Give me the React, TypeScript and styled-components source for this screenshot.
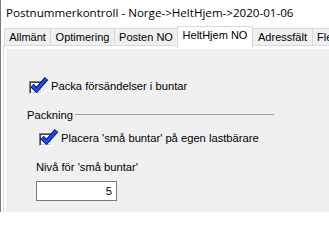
import React from "react";
import styled, { createGlobalStyle } from "styled-components";

const Global = createGlobalStyle`
  html, body { margin: 0; padding: 0; background: #ffffff; }
  body { font-family: "Liberation Sans", Arial, sans-serif; font-size: 11.2px; color: #000; }
`;

const Window = styled.div`
  width: 329px;
  height: 212px;
  box-sizing: border-box;
  border-left: 1px solid #7a7a7a;
  background: #ffffff;
  display: flex;
  flex-direction: column;
  overflow: hidden;
`;

const TitleBar = styled.div`
  height: 26px;
  flex: 0 0 26px;
  padding-left: 5px;
  box-sizing: border-box;
  font-family: "Open Sans", "Liberation Sans", sans-serif;
  font-size: 11.6px;
  line-height: 26px;
  white-space: nowrap;
  color: #000;
`;

const TabStrip = styled.div`
  height: 19px;
  flex: 0 0 19px;
  display: flex;
  align-items: flex-end;
  padding-left: 3px;
  position: relative;
  z-index: 1;
`;

const Tab = styled.div<{ $w: number; $active?: boolean; $clipped?: boolean }>`
  width: ${(p) => p.$w}px;
  flex: 0 0 ${(p) => p.$w}px;
  box-sizing: border-box;
  margin-right: -1px;
  border: 1px solid #d9d9d9;
  border-bottom: none;
  background: ${(p) => (p.$active ? "#ffffff" : "#f0f0f0")};
  height: ${(p) => (p.$active ? 22 : 17)}px;
  margin-bottom: ${(p) => (p.$active ? -3 : 0)}px;
  padding-top: 1px;
  padding-left: ${(p) => (p.$clipped ? 4 : 0)}px;
  line-height: 15px;
  font-size: 11px;
  text-align: ${(p) => (p.$clipped ? "left" : "center")};
  white-space: nowrap;
  overflow: hidden;
  position: relative;
  z-index: ${(p) => (p.$active ? 2 : 1)};
`;

const Panel = styled.div`
  flex: 1;
  margin-left: 2px;
  border-top: 1px solid #d9d9d9;
  border-left: 1px solid #d9d9d9;
  padding: 3px 0 0 2px;
  background: #ffffff;
  display: flex;
  min-height: 0;
`;

const Page = styled.div`
  flex: 1;
  background: #f0f0f0;
  display: flex;
  flex-direction: column;
  align-items: flex-start;
`;

const CheckRow = styled.div<{ $indent: number; $top: number }>`
  display: flex;
  align-items: center;
  height: 13px;
  margin-left: ${(p) => p.$indent}px;
  margin-top: ${(p) => p.$top}px;
  gap: 9px;
  white-space: nowrap;
`;

const Box = styled.span`
  position: relative;
  width: 13px;
  height: 13px;
  flex: 0 0 13px;
  box-sizing: border-box;
  border-top: 1px solid #808080;
  border-left: 1px solid #808080;
  border-right: 1px solid #ffffff;
  border-bottom: 1px solid #ffffff;
  box-shadow: inset 1px 1px 0 #404040, inset -1px -1px 0 #d4d0c8;
  background: #ffffff;
`;

const CheckMark = styled.svg`
  position: absolute;
  left: -1px;
  top: -5px;
  width: 20px;
  height: 17px;
  overflow: visible;
`;

const RowLabel = styled.span`
  line-height: 13px;
  position: relative;
  top: -1px;
`;

const GroupHeader = styled.div`
  display: flex;
  align-items: center;
  width: 247px;
  height: 13px;
  margin-left: 21px;
  margin-top: 15px;
  gap: 2px;
`;

const GroupTitle = styled.span`
  line-height: 13px;
  white-space: nowrap;
`;

const GroupLine = styled.span`
  flex: 1;
  height: 1px;
  background: #a0a0a0;
  position: relative;
  top: -1px;
`;

const FieldLabel = styled.div`
  margin-left: 30px;
  margin-top: 15px;
  line-height: 13px;
  white-space: nowrap;
`;

const NumberInput = styled.div`
  margin-left: 30px;
  margin-top: 7px;
  width: 81px;
  height: 20px;
  box-sizing: border-box;
  border: 1px solid #7a7a7a;
  background: #ffffff;
  text-align: right;
  padding-right: 4px;
  line-height: 18px;
`;

function Checkbox() {
  return (
    <Box>
      <CheckMark viewBox="0 0 20 17">
        <path d="M3 8.5 L7.5 13 L17.5 1.5" fill="none" stroke="#000a6e" strokeWidth="4.6" strokeLinejoin="miter" />
        <path d="M3 8.5 L7.5 13 L17.5 1.5" fill="none" stroke="#1553ff" strokeWidth="2.6" strokeLinejoin="miter" />
      </CheckMark>
    </Box>
  );
}

const tabs = [
  { label: "Allmänt", w: 47 },
  { label: "Optimering", w: 65 },
  { label: "Posten NO", w: 64 },
  { label: "HeltHjem NO", w: 76, active: true },
  { label: "Adressfält", w: 61 },
  { label: "Flera", w: 40, clipped: true },
];

export default function App() {
  return (
    <>
      <Global />
      <Window>
        <TitleBar>Postnummerkontroll - Norge-&gt;HeltHjem-&gt;2020-01-06</TitleBar>
        <TabStrip>
          {tabs.map((t) => (
            <Tab key={t.label} $w={t.w} $active={t.active} $clipped={t.clipped}>
              {t.label}
            </Tab>
          ))}
        </TabStrip>
        <Panel>
          <Page>
            <CheckRow $indent={29 - 6} $top={32}>
              <Checkbox />
              <RowLabel>Packa försändelser i buntar</RowLabel>
            </CheckRow>
            <GroupHeader>
              <GroupTitle>Packning</GroupTitle>
              <GroupLine />
            </GroupHeader>
            <CheckRow $indent={39 - 6} $top={11}>
              <Checkbox />
              <RowLabel>Placera 'små buntar' på egen lastbärare</RowLabel>
            </CheckRow>
            <FieldLabel>Nivå för 'små buntar'</FieldLabel>
            <NumberInput>5</NumberInput>
          </Page>
        </Panel>
      </Window>
    </>
  );
}
